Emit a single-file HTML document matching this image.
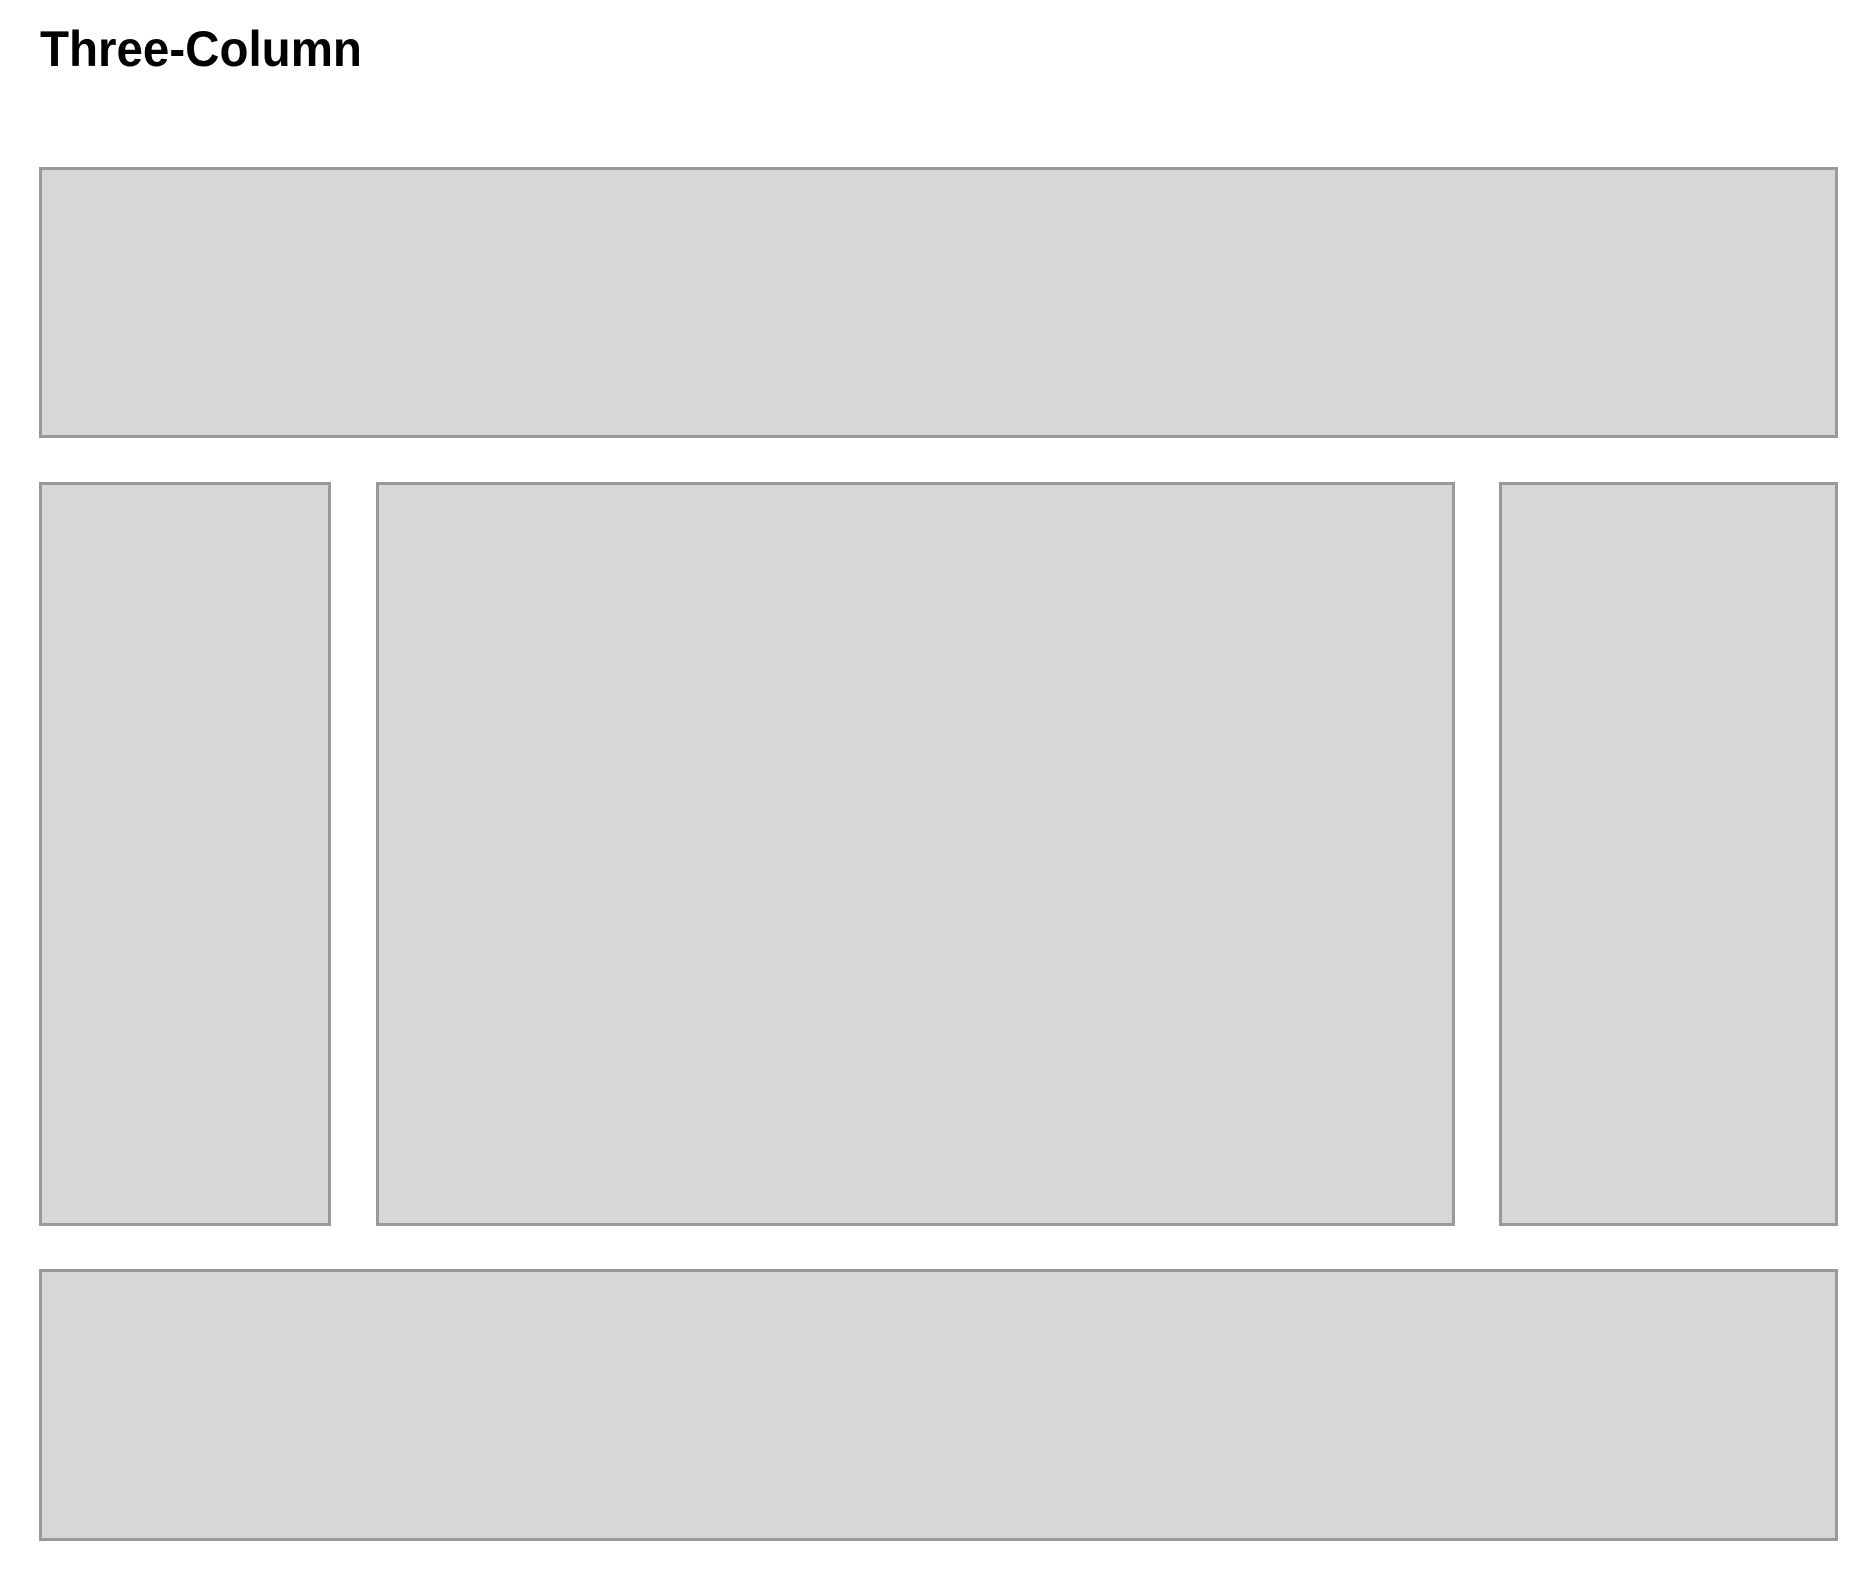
<!DOCTYPE html>
<html><head><meta charset="utf-8"><style>
html,body{margin:0;padding:0;background:#fff;width:1872px;height:1580px;overflow:hidden;position:relative}
.b{position:absolute;box-sizing:border-box;background:#d7d7d7;border:3px solid #999}
h1{position:absolute;left:40px;top:21px;margin:0;font:bold 50px/56px "Liberation Sans",sans-serif;color:#000;transform:scaleX(0.95);transform-origin:0 0;white-space:nowrap}
</style></head><body>
<h1>Three-Column</h1>
<div class="b" style="left:39px;top:167px;width:1799px;height:271px"></div>
<div class="b" style="left:39px;top:482px;width:292px;height:744px"></div>
<div class="b" style="left:376px;top:482px;width:1079px;height:744px"></div>
<div class="b" style="left:1499px;top:482px;width:339px;height:744px"></div>
<div class="b" style="left:39px;top:1269px;width:1799px;height:272px"></div>
</body></html>
